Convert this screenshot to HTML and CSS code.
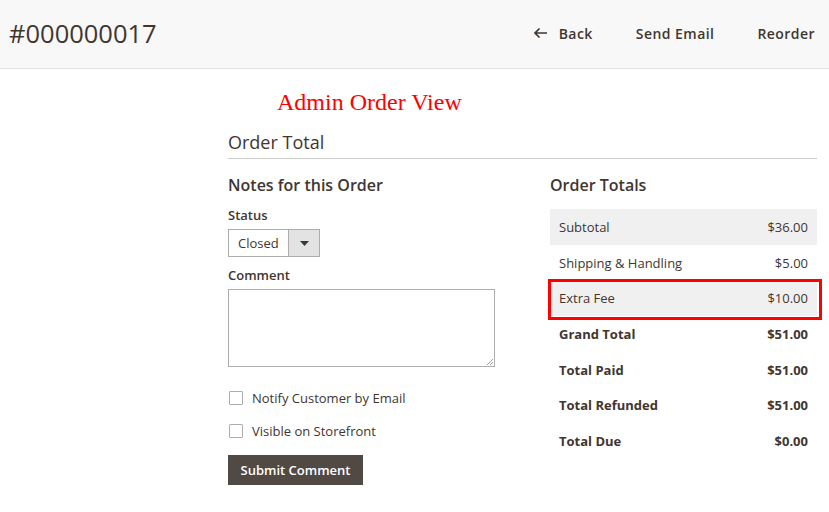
FILE: index.html
```html
<!DOCTYPE html>
<html>
<head>
<meta charset="utf-8">
<link rel="stylesheet" href="styles.css">
</head>
<body>
<header class="page-header">
  <h1 class="page-title">#000000017</h1>
  <nav class="actions">
    <button class="action back">
      <svg width="15" height="12" viewBox="0 0 15 12"><path d="M14 6H2M6.5 1.5L2 6l4.5 4.5" fill="none" stroke="#41362f" stroke-width="1.7"/></svg>
      <span>Back</span>
    </button>
    <button class="action">Send Email</button>
    <button class="action">Reorder</button>
  </nav>
</header>
<main class="content">
  <div class="caption">Admin Order View</div>
  <h2 class="section-title">Order Total</h2>
  <div class="columns">
    <section class="notes">
      <h3 class="col-title">Notes for this Order</h3>
      <label class="field-label">Status</label>
      <div class="select">
        <span class="select-value">Closed</span>
        <span class="select-arrow"><svg width="9" height="5" viewBox="0 0 9 5"><path d="M0 0h9L4.5 5z" fill="#41362f"/></svg></span>
      </div>
      <label class="field-label comment-label">Comment</label>
      <div class="textarea">
        <svg class="grip" width="7" height="7" viewBox="0 0 7 7"><path d="M7 1L1 7M7 4L4 7" stroke="#888" stroke-width="0.8"/></svg>
      </div>
      <div class="checks">
        <div class="check"><span class="box"></span><span>Notify Customer by Email</span></div>
        <div class="check"><span class="box"></span><span>Visible on Storefront</span></div>
      </div>
      <button class="submit">Submit Comment</button>
    </section>
    <section class="totals">
      <h3 class="col-title">Order Totals</h3>
      <div class="table">
        <div class="row stripe"><span>Subtotal</span><span>$36.00</span></div>
        <div class="row"><span>Shipping &amp; Handling</span><span>$5.00</span></div>
        <div class="row stripe highlight"><span>Extra Fee</span><span>$10.00</span></div>
        <div class="row strong"><span>Grand Total</span><span>$51.00</span></div>
        <div class="row strong"><span>Total Paid</span><span>$51.00</span></div>
        <div class="row strong"><span>Total Refunded</span><span>$51.00</span></div>
        <div class="row strong"><span>Total Due</span><span>$0.00</span></div>
      </div>
    </section>
  </div>
</main>
</body>
</html>
```
FILE: styles.css
```css
* { box-sizing: border-box; }
body {
  margin: 0;
  font-family: "Open Sans", "Noto Sans", sans-serif;
  color: #41362f;
  background: #fff;
}
.page-header {
  height: 69px;
  background: #f8f8f8;
  border-bottom: 1px solid #e3e3e3;
  display: flex;
  align-items: center;
  justify-content: space-between;
  padding: 0 14px 0 9px;
}
.page-title {
  margin: 0;
  font-size: 25.5px;
  font-weight: 400;
  color: #41362f;
  position: relative;
  top: -1px;
}
.actions {
  display: flex;
  gap: 43px;
  align-items: center;
  position: relative;
  top: -1px;
}
.action {
  border: 0;
  background: none;
  padding: 0;
  font-family: inherit;
  font-size: 14px;
  font-weight: 600;
  color: #41362f;
  display: flex;
  align-items: center;
  gap: 11px;
  letter-spacing: 0.45px;
}
.content {
  padding: 0 12px 0 228px;
}
.caption {
  font-family: "Liberation Serif", "Times New Roman", serif;
  color: #ff0000;
  font-size: 24px;
  margin: 19px 0 0 49px;
  line-height: 28px;
}
.section-title {
  margin: 14px 0 0;
  font-size: 18px;
  font-weight: 400;
  line-height: 24px;
  padding-bottom: 4px;
  border-bottom: 1px solid #cccccc;
}
.columns {
  display: flex;
  justify-content: space-between;
  margin-top: 15px;
}
.notes { width: 267px; }
.totals { width: 267px; }
.col-title {
  margin: 0;
  font-size: 16px;
  font-weight: 600;
  line-height: 22px;
}
.field-label {
  display: block;
  font-size: 13px;
  font-weight: 600;
  margin-top: 10px;
  line-height: 18px;
}
.select {
  margin-top: 5px;
  width: 92px;
  height: 28px;
  border: 1px solid #adadad;
  display: flex;
  font-size: 13px;
}
.select-value {
  flex: 1;
  padding-left: 9px;
  line-height: 26px;
  background: #fff;
}
.select-arrow {
  width: 31px;
  background: #e3e3e3;
  border-left: 1px solid #adadad;
  display: flex;
  align-items: center;
  justify-content: center;
}
.comment-label { margin-top: 9px; }
.textarea {
  margin-top: 5px;
  width: 267px;
  height: 78px;
  border: 1px solid #adadad;
  position: relative;
}
.grip { position: absolute; right: 1px; bottom: 1px; }
.checks {
  margin-top: 22px;
  display: flex;
  flex-direction: column;
  gap: 15px;
}
.check {
  display: flex;
  align-items: center;
  gap: 9px;
  font-size: 13px;
  line-height: 18px;
}
.box {
  width: 14px;
  height: 14px;
  border: 1px solid #adadad;
  border-radius: 1px;
  margin-left: 1px;
  background: #fff;
}
.submit {
  margin-top: 15px;
  background: #514943;
  color: #fff;
  border: 0;
  font-family: inherit;
  font-size: 13px;
  font-weight: 600;
  height: 30px;
  width: 135px;
  padding: 0;
}
.table {
  margin-top: 13px;
}
.row {
  display: flex;
  justify-content: space-between;
  height: 35.7px;
  align-items: center;
  padding: 0 9px;
  font-size: 13px;
}
.stripe { background: #f0f0f0; }
.strong { font-weight: 700; }
.highlight { position: relative; }
.highlight::after {
  content: "";
  position: absolute;
  left: -2px;
  right: -5px;
  top: -1px;
  bottom: -4px;
  border: 3px solid #ff0000;
}
```
